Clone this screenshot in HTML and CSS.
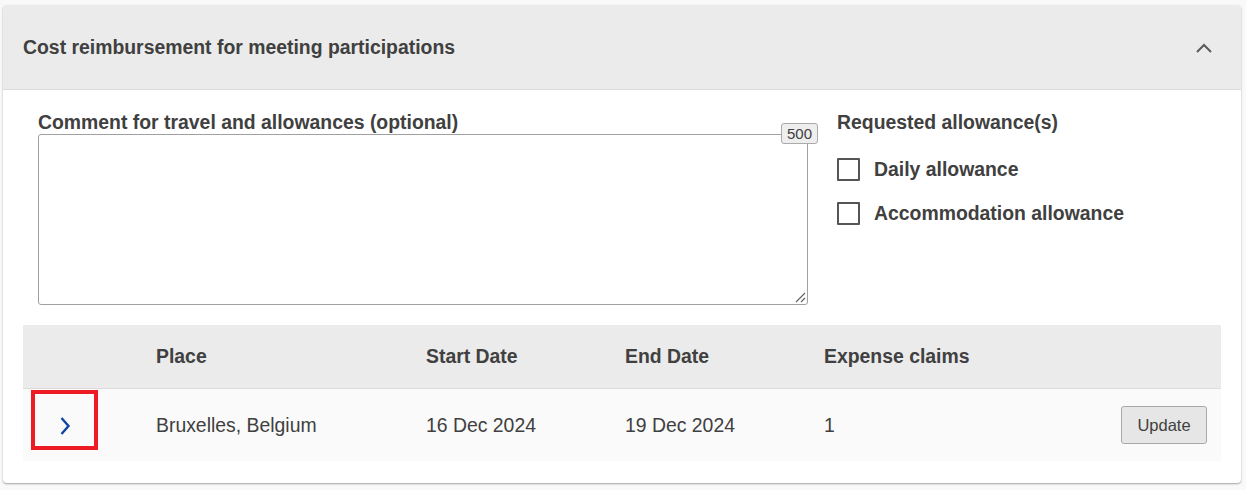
FILE: index.html
```html
<!DOCTYPE html>
<html>
<head>
<meta charset="utf-8">
<link rel="stylesheet" href="styles.css">
</head>
<body>
<div class="card">
  <div class="card-header">
    <h2 class="card-title">Cost reimbursement for meeting participations</h2>
    <svg class="collapse-icon" width="18" height="12" viewBox="0 0 18 12"><path d="M2 10 L9 3 L16 10" fill="none" stroke="#5a5a5a" stroke-width="2"/></svg>
  </div>
  <div class="card-body">
    <div class="form-row">
      <div class="comment-col">
        <label class="field-label">Comment for travel and allowances (optional)</label>
        <div class="textarea-wrap">
          <div class="textarea"><svg class="resize" width="12" height="12" viewBox="0 0 12 12"><path d="M2 11 L11 2 M7 11 L11 7" stroke="#666" stroke-width="1.2"/></svg></div>
          <span class="counter">500</span>
        </div>
      </div>
      <div class="allow-col">
        <div class="field-label">Requested allowance(s)</div>
        <div class="checks">
          <div class="check"><span class="box"></span><span>Daily allowance</span></div>
          <div class="check"><span class="box"></span><span>Accommodation allowance</span></div>
        </div>
      </div>
    </div>
    <div class="table">
      <div class="thead">
        <div class="c c0"></div>
        <div class="c c1">Place</div>
        <div class="c c2">Start Date</div>
        <div class="c c3">End Date</div>
        <div class="c c4">Expense claims</div>
        <div class="c c5"></div>
      </div>
      <div class="trow">
        <div class="c c0"><span class="toggle"><svg width="14" height="20" viewBox="0 0 14 20"><path d="M3.5 2 L10.5 10 L3.5 18" fill="none" stroke="#0e47a1" stroke-width="2.4"/></svg></span></div>
        <div class="c c1">Bruxelles, Belgium</div>
        <div class="c c2">16 Dec 2024</div>
        <div class="c c3">19 Dec 2024</div>
        <div class="c c4">1</div>
        <div class="c c5"><button class="btn">Update</button></div>
      </div>
    </div>
  </div>
</div>
</body>
</html>
```
FILE: styles.css
```css
* { box-sizing: border-box; }
body {
  margin: 0;
  padding: 5px 5px 5px 3px;
  background: #f9f9f9;
  font-family: "Liberation Sans", Arial, sans-serif;
  color: #404040;
}
.card {
  width: 1238px;
  background: #fff;
  border-radius: 4px;
  box-shadow: 0 1px 2px rgba(0,0,0,0.35);
  overflow: hidden;
}
.card-header {
  height: 85px;
  background: #ebebeb;
  border-bottom: 1px solid #dcdcdc;
  display: flex;
  align-items: center;
  justify-content: space-between;
  padding: 0 28px 0 20px;
}
.card-title {
  margin: 0;
  font-size: 19.4px;
  font-weight: bold;
  color: #404040;
}
.collapse-icon { margin-top: 2px; }
.card-body {
  padding: 21px 20px 22px 20px;
}
.form-row {
  display: flex;
  padding-left: 15px;
  gap: 29px;
  height: 214px;
}
.comment-col { width: 770px; }
.field-label {
  display: block;
  font-size: 19.4px;
  font-weight: bold;
  line-height: 22px;
  height: 22px;
}
.textarea-wrap { position: relative; margin-top: 1px; }
.textarea {
  height: 171px;
  border: 1px solid #a0a0a0;
  border-radius: 3px;
  position: relative;
}
.resize { position: absolute; right: 1px; bottom: 1px; }
.counter {
  position: absolute;
  right: -10px;
  top: -11px;
  font-size: 15px;
  line-height: 19px;
  padding: 0 5px;
  background: #eee;
  border: 1px solid #aaa;
  border-radius: 3px;
  color: #404040;
}
.allow-col { flex: 1; }
.checks {
  display: flex;
  flex-direction: column;
  gap: 14px;
  margin-top: 21px;
}
.check {
  display: flex;
  align-items: center;
  gap: 14px;
  font-size: 19.4px;
  font-weight: bold;
  height: 30px;
}
.box {
  width: 23px;
  height: 23px;
  border: 2px solid #555;
  border-radius: 1px;
  flex: none;
}
.table { width: 1198px; }
.thead, .trow { display: flex; align-items: center; }
.thead {
  height: 64px;
  background: #ebebeb;
  border-bottom: 1px solid #dcdcdc;
  font-weight: bold;
  font-size: 19.4px;
}
.trow {
  height: 72px;
  background: #fafafa;
  font-size: 19.4px;
}
.c { padding-left: 16px; }
.c0 { width: 117px; padding-left: 8px; align-self: flex-start; padding-top: 1px; }
.c1 { width: 270px; }
.c2 { width: 199px; }
.c3 { width: 199px; }
.c4 { width: 200px; }
.c5 { flex: 1; display: flex; justify-content: flex-end; padding-right: 14px; }
.toggle {
  display: flex;
  align-items: center;
  justify-content: center;
  width: 67px;
  height: 60px;
  border: 4.5px solid #ed1c24;
}
.toggle svg { margin-top: 12px; margin-left: 0; }
.btn {
  font-family: "Liberation Sans", Arial, sans-serif;
  font-size: 16.5px;
  color: #404040;
  background: #e6e6e6;
  border: 1px solid #a8a8a8;
  border-radius: 3px;
  width: 86px;
  height: 38px;
  padding: 0;
}
```
